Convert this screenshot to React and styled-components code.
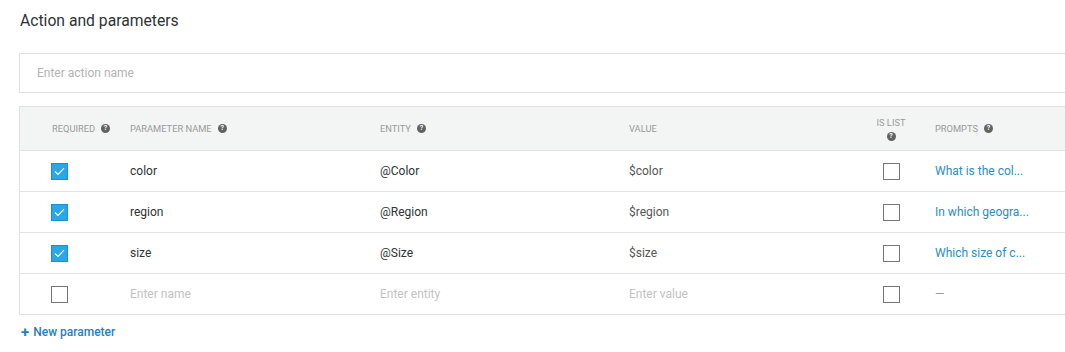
import styled, { createGlobalStyle } from 'styled-components';

const GlobalStyle = createGlobalStyle`
  html, body {
    margin: 0;
    padding: 0;
    background: #fff;
    overflow: hidden;
  }
  body {
    font-family: Roboto, "Liberation Sans", sans-serif;
    color: #333;
  }
`;

const Page = styled.div`
  padding: 11px 0 0 19px;
`;

const Title = styled.h2`
  margin: 0 0 22px 1px;
  font-size: 15.7px;
  font-weight: 400;
  line-height: 20px;
  color: #2f3235;
`;

const ActionInput = styled.div`
  height: 38px;
  border: 1px solid #dfe0e0;
  border-right: none;
  display: flex;
  align-items: center;
  padding-left: 17px;
  font-size: 12px;
  color: #b3b3b3;
  margin-bottom: 13px;
`;

const Table = styled.div`
  border: 1px solid #dfe0e0;
  border-right: none;
`;

const Row = styled.div`
  display: grid;
  grid-template-columns: 110px 250px 249px 232px 60px 1fr;
  align-items: center;
  height: ${(p) => (p.$head ? '43px' : '40px')};
  background: ${(p) => (p.$head ? '#f3f4f4' : '#fff')};
  & + & {
    border-top: 1px solid #e2e3e3;
  }
`;

const Cell = styled.div`
  padding-left: ${(p) => p.$pad || 0}px;
  font-size: 12px;
  color: ${(p) => (p.$muted ? '#c2c2c2' : p.$soft ? '#555' : '#2f3235')};
  display: flex;
  align-items: center;
  justify-content: ${(p) => (p.$center ? 'center' : 'flex-start')};
  white-space: nowrap;
`;

const HeadCell = styled.div`
  padding-left: ${(p) => p.$pad || 0}px;
  font-size: 9.3px;
  text-transform: uppercase;
  color: #9a9a9a;
  display: flex;
  flex-direction: ${(p) => (p.$stack ? 'column' : 'row')};
  align-items: center;
  gap: ${(p) => (p.$stack ? '4px' : '6px')};
`;

const Help = styled.span`
  width: 9px;
  height: 9px;
  border-radius: 50%;
  background: #626262;
  color: #fff;
  font-size: 7px;
  font-weight: 700;
  line-height: 9px;
  text-align: center;
  display: inline-block;
`;

const Box = styled.span`
  width: 17px;
  height: 17px;
  box-sizing: border-box;
  border: 1px solid ${(p) => (p.$on ? '#1d8fd0' : '#767676')};
  background: ${(p) => (p.$on ? '#2aa7e8' : '#fff')};
  display: inline-flex;
  align-items: center;
  justify-content: center;
`;

const Prompt = styled.span`
  color: #2a8ccc;
  font-size: 12px;
`;

const Dash = styled.span`
  color: #999;
  font-size: 12px;
`;

const AddLink = styled.div`
  margin: 10px 0 0 2px;
  font-size: 12px;
  font-weight: 500;
  color: #1f7fc2;
  display: flex;
  align-items: center;
  gap: 4px;
`;

const Plus = styled.span`
  font-size: 15px;
  font-weight: 700;
  line-height: 12px;
`;

const Check = ({ on }) => (
  <Box $on={on}>
    {on && (
      <svg width="11" height="9" viewBox="0 0 11 9">
        <path d="M1 4.5 L4 7.5 L10 1.2" fill="none" stroke="#fff" strokeWidth="1.1" />
      </svg>
    )}
  </Box>
);

const params = [
  { name: 'color', entity: '@Color', value: '$color', prompt: 'What is the col...' },
  { name: 'region', entity: '@Region', value: '$region', prompt: 'In which geogra...' },
  { name: 'size', entity: '@Size', value: '$size', prompt: 'Which size of c...' },
];

export default function App() {
  return (
    <>
      <GlobalStyle />
      <Page>
        <Title>Action and parameters</Title>
        <ActionInput>Enter action name</ActionInput>
        <Table>
          <Row $head>
            <HeadCell $pad={32}>
              Required <Help>?</Help>
            </HeadCell>
            <HeadCell>
              Parameter name <Help>?</Help>
            </HeadCell>
            <HeadCell>
              Entity <Help>?</Help>
            </HeadCell>
            <HeadCell>Value</HeadCell>
            <HeadCell $stack>
              Is list <Help>?</Help>
            </HeadCell>
            <HeadCell $pad={14}>
              Prompts <Help>?</Help>
            </HeadCell>
          </Row>
          {params.map((p) => (
            <Row key={p.name}>
              <Cell $pad={31}>
                <Check on />
              </Cell>
              <Cell>{p.name}</Cell>
              <Cell>{p.entity}</Cell>
              <Cell $soft>{p.value}</Cell>
              <Cell $center>
                <Check />
              </Cell>
              <Cell $pad={14}>
                <Prompt>{p.prompt}</Prompt>
              </Cell>
            </Row>
          ))}
          <Row>
            <Cell $pad={31}>
              <Check />
            </Cell>
            <Cell $muted>Enter name</Cell>
            <Cell $muted>Enter entity</Cell>
            <Cell $muted>Enter value</Cell>
            <Cell $center>
              <Check />
            </Cell>
            <Cell $pad={14}>
              <Dash>—</Dash>
            </Cell>
          </Row>
        </Table>
        <AddLink>
          <Plus>+</Plus>New parameter
        </AddLink>
      </Page>
    </>
  );
}
